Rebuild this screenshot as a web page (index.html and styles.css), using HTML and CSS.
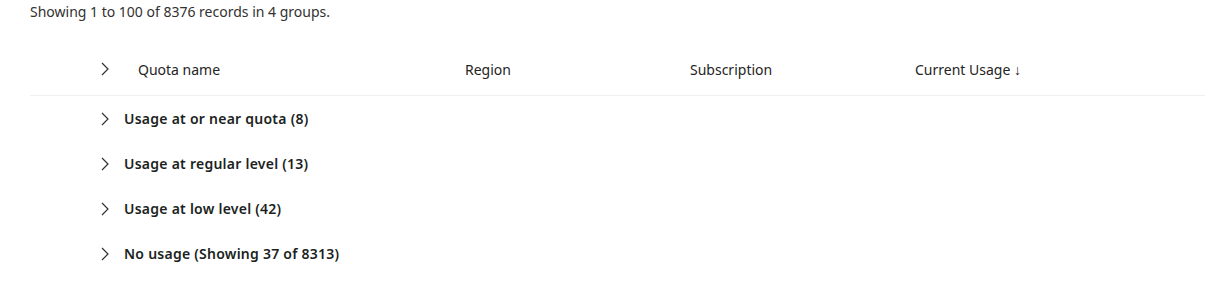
FILE: index.html
```html
<!DOCTYPE html>
<html lang="en">
<head>
    <meta charset="UTF-8">
    <title>Quotas</title>
    <link rel="stylesheet" href="styles.css">
</head>
<body>
    <div class="summary">Showing 1 to 100 of 8376 records in 4 groups.</div>

    <div class="grid">
        <div class="header-row">
            <span class="chevron-cell">
                <svg class="chevron" viewBox="0 0 8 14" width="8" height="14"><path d="M1 1 L7 7 L1 13" /></svg>
            </span>
            <span class="col col-name">Quota name</span>
            <span class="col col-region">Region</span>
            <span class="col col-sub">Subscription</span>
            <span class="col col-usage">Current Usage <span class="sort">&#8595;</span></span>
        </div>

        <div class="group-row">
            <svg class="chevron" viewBox="0 0 8 14" width="8" height="14"><path d="M1 1 L7 7 L1 13" /></svg>
            <span class="group-title">Usage at or near quota (8)</span>
        </div>
        <div class="group-row">
            <svg class="chevron" viewBox="0 0 8 14" width="8" height="14"><path d="M1 1 L7 7 L1 13" /></svg>
            <span class="group-title">Usage at regular level (13)</span>
        </div>
        <div class="group-row">
            <svg class="chevron" viewBox="0 0 8 14" width="8" height="14"><path d="M1 1 L7 7 L1 13" /></svg>
            <span class="group-title">Usage at low level (42)</span>
        </div>
        <div class="group-row">
            <svg class="chevron" viewBox="0 0 8 14" width="8" height="14"><path d="M1 1 L7 7 L1 13" /></svg>
            <span class="group-title">No usage (Showing 37 of 8313)</span>
        </div>
    </div>
</body>
</html>
```

FILE: styles.css
```css
body {
    margin: 0;
    padding: 0 0 0 30px;
    font-family: "Noto Sans", "Open Sans", sans-serif;
    font-size: 14px;
    color: #323130;
    background: #fff;
}

.summary {
    height: 24px;
    line-height: 24px;
}

.grid {
    margin-top: 23px;
}

.header-row {
    display: flex;
    align-items: center;
    height: 49px;
    padding-bottom: 4px;
    box-sizing: border-box;
    border-bottom: 1px solid #f0f0f0;
    color: #252423;
}

.chevron-cell {
    display: flex;
    align-items: center;
    width: 108px;
    padding-left: 71px;
    box-sizing: border-box;
}

.chevron {
    fill: none;
    stroke: #323130;
    stroke-width: 1.2;
}

.col-name {
    width: 327px;
}

.col-region,
.col-sub {
    width: 225px;
}

.sort {
    font-size: 14px;
}

.group-row {
    display: flex;
    align-items: center;
    height: 45px;
    padding-left: 71px;
}

.group-row .chevron {
    margin-right: 15px;
}

.group-title {
    font-weight: 600;
    letter-spacing: 0.25px;
    color: #201f1e;
}
```
